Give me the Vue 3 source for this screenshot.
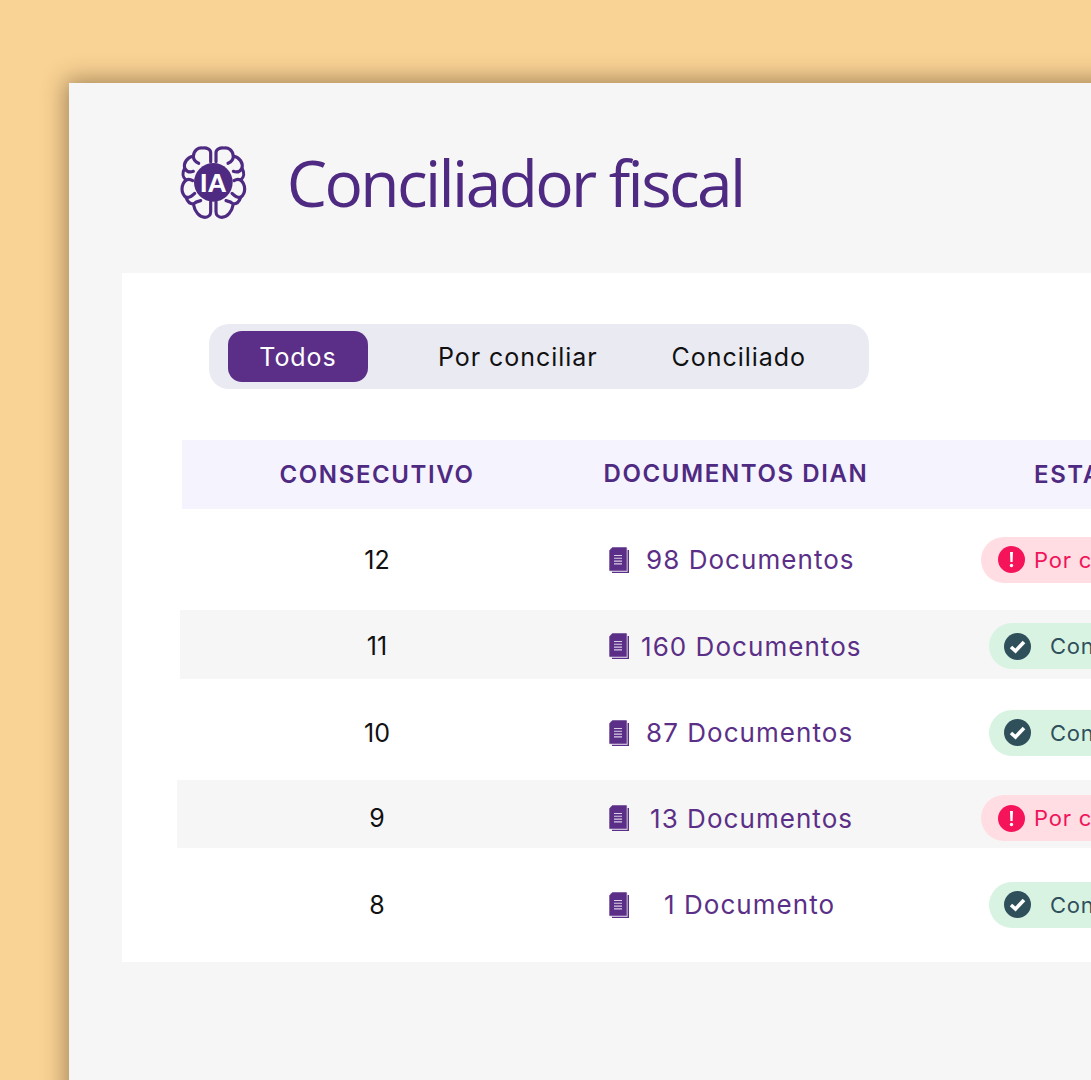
<script setup>
const rows = [
  { id: 12, docs: '98 Documentos', ok: false, docsGap: 17 },
  { id: 11, docs: '160 Documentos', ok: true, docsGap: 12, stripe: 'a' },
  { id: 10, docs: '87 Documentos', ok: true, docsGap: 17 },
  { id: 9, docs: '13 Documentos', ok: false, docsGap: 21, stripe: 'b' },
  { id: 8, docs: '1 Documento', ok: true, docsGap: 35 },
]
</script>

<template>
  <div class="page">
    <div class="sheet">
      <header class="head">
        <svg class="brain" viewBox="60 45 200 225" aria-hidden="true">
          <g class="brain-lines">
            <g id="half">
              <path d="M152 95V68C152 58 140 52 128 54C115 52 102 60 100 78C82 82 70 98 74 115C66 128 68 142 78 150C62 165 62 190 78 202C82 215 90 222 100 222C104 245 118 262 135 262C145 262 152 255 152 245V215" />
              <path d="M100 78C100 90 106 96 116 100M74 115C80 125 90 128 100 124M78 150C84 147 92 148 98 152M78 202C88 204 96 198 104 190M100 222C106 216 112 214 122 212" />
            </g>
            <use href="#half" transform="matrix(-1 0 0 1 320 0)" />
          </g>
          <circle cx="160" cy="157" r="58" class="brain-core" />
          <text x="160" y="185" class="brain-text">IA</text>
        </svg>
        <h1 class="title">Conciliador fiscal</h1>
      </header>

      <section class="panel">
        <nav class="tabs">
          <span class="tab active">Todos</span>
          <span class="tab second">Por conciliar</span>
          <span class="tab third">Conciliado</span>
        </nav>

        <div class="table">
          <div class="thead">
            <div>CONSECUTIVO</div>
            <div>DOCUMENTOS DIAN</div>
            <div>ESTADO</div>
          </div>
          <div
            v-for="r in rows"
            :key="r.id"
            class="row"
            :class="['row-' + r.id, r.stripe ? 'stripe-' + r.stripe : '']"
          >
            <div class="num">{{ r.id }}</div>
            <div class="docs">
              <svg class="doc" viewBox="0 0 20 26" aria-hidden="true">
                <path class="doc-back" d="M3 3H20V26H3Z" />
                <path class="doc-gap" d="M1 1H18.6V24.8H1Z" />
                <path class="doc-front" d="M3.4 0.3H17.7V23.7H0.3V3.4Z" />
                <path class="doc-lines" d="M5 8.5H13M5 11.3H13M5 14.1H13M5 16.9H13" />
              </svg>
              <span :style="{ marginLeft: r.docsGap + 'px' }">{{ r.docs }}</span>
            </div>
            <div class="status">
              <span v-if="r.ok" class="pill ok">
                <svg class="mark" viewBox="0 0 27 27" aria-hidden="true">
                  <circle cx="13.5" cy="13.5" r="13.5" fill="#2f4f5b" />
                  <path d="M7 14L11.5 18L20 9" fill="none" stroke="#fff" stroke-width="3.6" />
                </svg>
                Conciliado
              </span>
              <span v-else class="pill bad">
                <svg class="mark" viewBox="0 0 27 27" aria-hidden="true">
                  <circle cx="13.5" cy="13.5" r="13.5" fill="#f5145a" />
                  <path d="M12 6H15L14.6 16H12.4Z" fill="#fff" />
                  <circle cx="13.5" cy="19.5" r="1.7" fill="#fff" />
                </svg>
                Por conciliar
              </span>
            </div>
          </div>
        </div>
      </section>
    </div>
  </div>
</template>

<style>
html, body { margin: 0; overflow: hidden; }
</style>

<style scoped>
.page {
  width: 1091px;
  height: 1080px;
  overflow: hidden;
  background: #f9d295;
  padding: 83px 0 0 69px;
  box-sizing: border-box;
  font-family: Inter, "Open Sans", sans-serif;
}
.sheet {
  width: 1200px;
  height: 1100px;
  background: #f6f6f6;
  box-shadow: -3px -3px 22px rgba(70, 50, 20, 0.48);
  padding: 61px 0 0 53px;
  box-sizing: border-box;
}
.head {
  display: flex;
  align-items: center;
  height: 77px;
  padding-left: 58px;
  margin-bottom: 52px;
}
.brain { width: 66.7px; height: 75px; flex: none; }
.brain-lines path { fill: none; stroke: #4f2a82; stroke-width: 9.5; stroke-linecap: round; stroke-linejoin: round; }
.brain-core { fill: #4f2a82; }
.brain-text {
  fill: #fff;
  font: 700 80px "Liberation Sans", sans-serif;
  text-anchor: middle;
}
.title {
  margin: 0 0 0 40px;
  font: 400 64px "Open Sans", sans-serif;
  letter-spacing: -2.6px;
  color: #4f2a82;
  white-space: nowrap;
}
.panel {
  width: 1100px;
  height: 689px;
  background: #fff;
  padding: 51px 0 0 60px;
  box-sizing: border-box;
}
.tabs {
  width: 660px;
  height: 65px;
  margin-left: 27px;
  background: #eaeaf3;
  border-radius: 20px;
  display: flex;
  align-items: center;
  padding-left: 19px;
  box-sizing: border-box;
  font-size: 25px;
  letter-spacing: 0.95px;
  color: #111;
}
.tab { white-space: nowrap; }
.active {
  width: 140px;
  height: 51px;
  background: #5b2f87;
  color: #fff;
  border-radius: 14px;
  display: flex;
  align-items: center;
  justify-content: center;
}
.second { margin-left: 70px; }
.third { margin-left: 74px; }
.table { margin-top: 51px; }
.thead, .row {
  display: grid;
  grid-template-columns: 390px 328px 400px;
  align-items: center;
  text-align: center;
  box-sizing: border-box;
}
.thead {
  height: 69px;
  background: #f5f3fd;
  color: #4f2a82;
  font-weight: 600;
  font-size: 24px;
  letter-spacing: 1.6px;
}
.thead div:nth-child(2) { padding-bottom: 2px; }
.thead div:last-child { text-align: left; padding-left: 134px; }
.row { height: 69px; font-size: 25px; color: #111; }
.row-12 { margin-top: 16px; }
.row-11 { margin-top: 16px; padding-top: 3px; }
.row-10 { margin-top: 19px; }
.row-9 { margin-top: 13px; height: 68px; padding-top: 8px; }
.row-8 { margin-top: 22px; }
.stripe-a { background: #f6f6f6; margin-left: -2px; padding-left: 2px; }
.stripe-b { background: #f6f6f6; margin-left: -5px; padding-left: 5px; }
.docs {
  display: flex;
  align-items: center;
  color: #5b2f87;
  padding-left: 37px;
  white-space: nowrap;
  font-size: 26px;
  letter-spacing: 1.05px;
}
.doc { width: 20px; height: 26px; flex: none; }
.doc-back, .doc-front { fill: #5b2f87; }
.doc-gap { fill: #e6e0ee; }
.doc-lines { stroke: #d9cfe6; stroke-width: 1.1; fill: none; }
.status { display: flex; justify-content: center; font-size: 22px; letter-spacing: 0.8px; }
.pill {
  display: inline-flex;
  align-items: center;
  height: 46px;
  border-radius: 23px;
  white-space: nowrap;
  box-sizing: border-box;
}
.pill.ok { width: 222px; padding-left: 15px; gap: 19px; background: #d8f3e2; color: #2f4f5b; }
.pill.bad { width: 238px; padding-left: 17px; gap: 9px; background: #ffdde2; color: #f0145a; }
.mark { width: 27px; height: 27px; flex: none; }
</style>
